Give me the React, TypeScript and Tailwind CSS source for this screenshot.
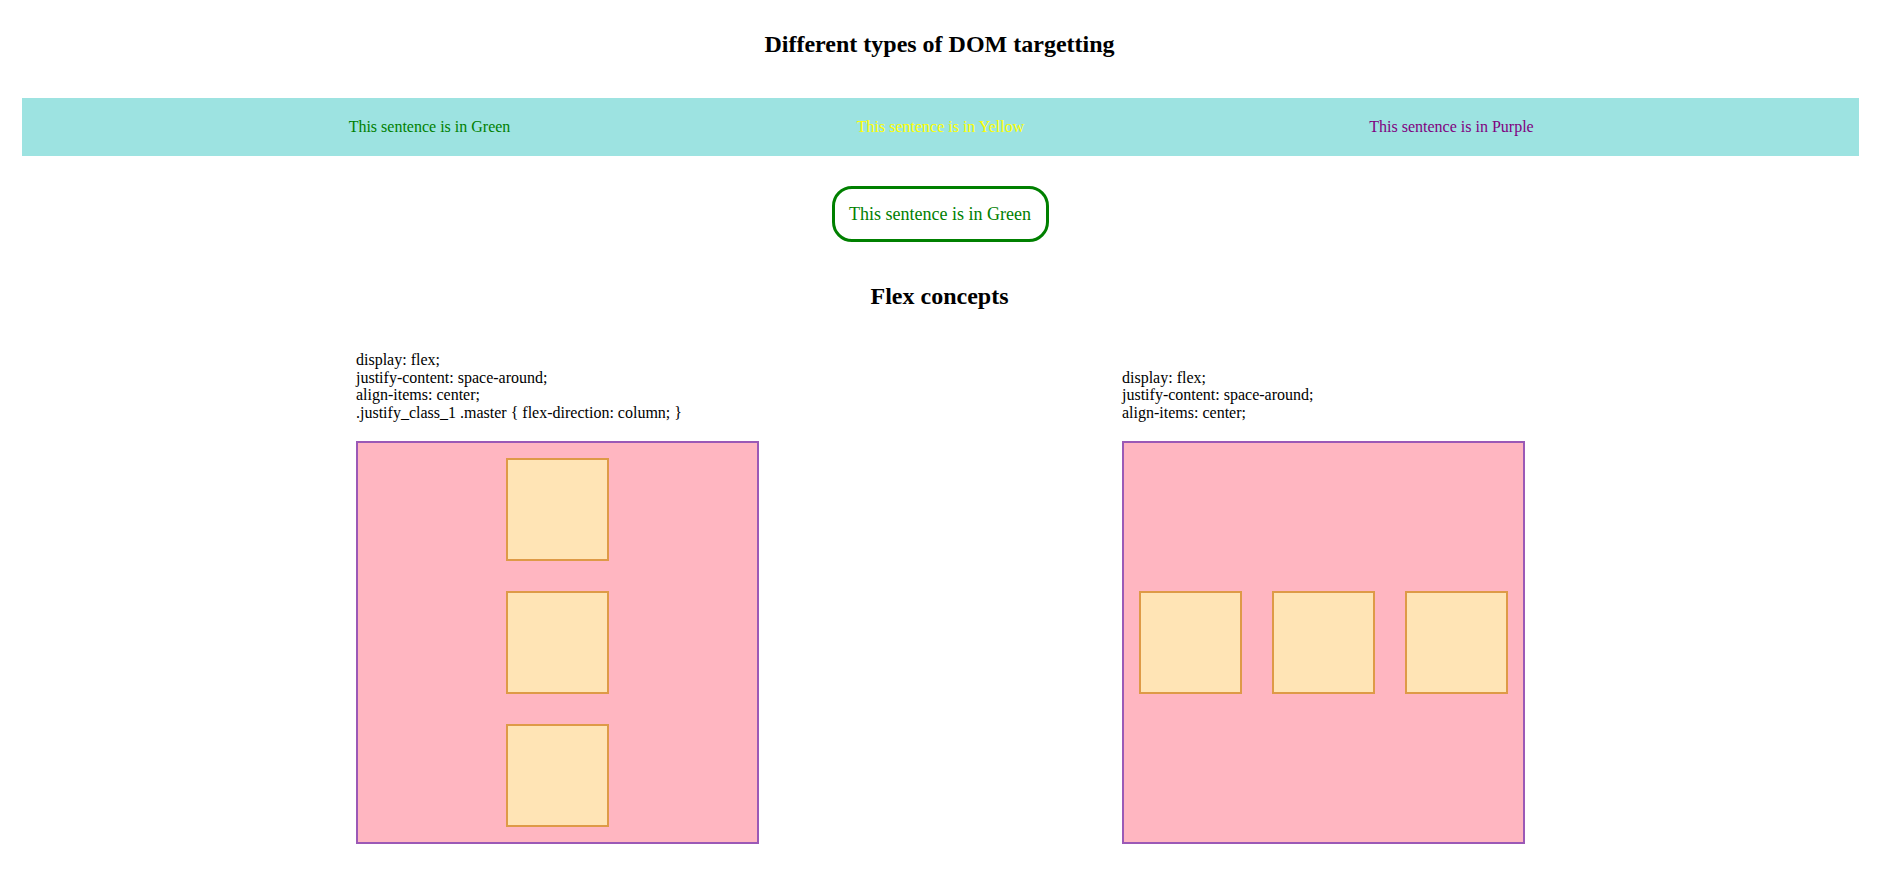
import React from "react";

const serif = { fontFamily: '"Liberation Serif", "Times New Roman", serif' };

function Item() {
  return <div className="w-[103px] h-[103px] shrink-0 bg-[#ffe4b5] border-2 border-[#de9a47]" />;
}

export default function App() {
  return (
    <div className="w-[1879px] min-h-[869px] bg-white text-black" style={serif}>
      <h2 className="pt-[30px] text-center text-[24px] leading-[28px] font-bold">Different types of DOM targetting</h2>

      <div className="mt-[40px] ml-[22px] mr-[20px] h-[58px] bg-[#9de3e1] flex items-center justify-center text-[16px] leading-[18px]">
        <div className="w-[511px] text-center text-[#008000]">This sentence is in Green</div>
        <div className="w-[511px] text-center text-[#ffff00]">This sentence is in Yellow</div>
        <div className="w-[511px] text-center text-[#800080]">This sentence is in Purple</div>
      </div>

      <div className="mt-[30px] flex justify-center">
        <div className="ml-px h-[56px] w-[217px] border-[3px] border-[#008000] rounded-[20px] flex items-center justify-center text-[18px] leading-[21px] text-[#008000] whitespace-nowrap">
          This sentence is in Green
        </div>
      </div>

      <h2 className="mt-[40px] text-center text-[24px] leading-[28px] font-bold">Flex concepts</h2>

      <div className="mt-[41px] pl-[356px] flex items-end gap-[363px]">
        <div className="w-[403px] flex flex-col">
          <div className="text-[16px] leading-[17.7px] mb-[19px]">
            <div>display: flex;</div>
            <div>justify-content: space-around;</div>
            <div>align-items: center;</div>
            <div>.justify_class_1 .master {"{"} flex-direction: column; {"}"}</div>
          </div>
          <div className="w-[403px] h-[403px] bg-[#ffb6c1] border-2 border-[#9b59b6] flex flex-col items-center justify-around">
            <Item />
            <Item />
            <Item />
          </div>
        </div>
        <div className="w-[403px] flex flex-col">
          <div className="text-[16px] leading-[17.7px] mb-[19px]">
            <div>display: flex;</div>
            <div>justify-content: space-around;</div>
            <div>align-items: center;</div>
          </div>
          <div className="w-[403px] h-[403px] bg-[#ffb6c1] border-2 border-[#9b59b6] flex flex-row items-center justify-around">
            <Item />
            <Item />
            <Item />
          </div>
        </div>
      </div>
    </div>
  );
}
